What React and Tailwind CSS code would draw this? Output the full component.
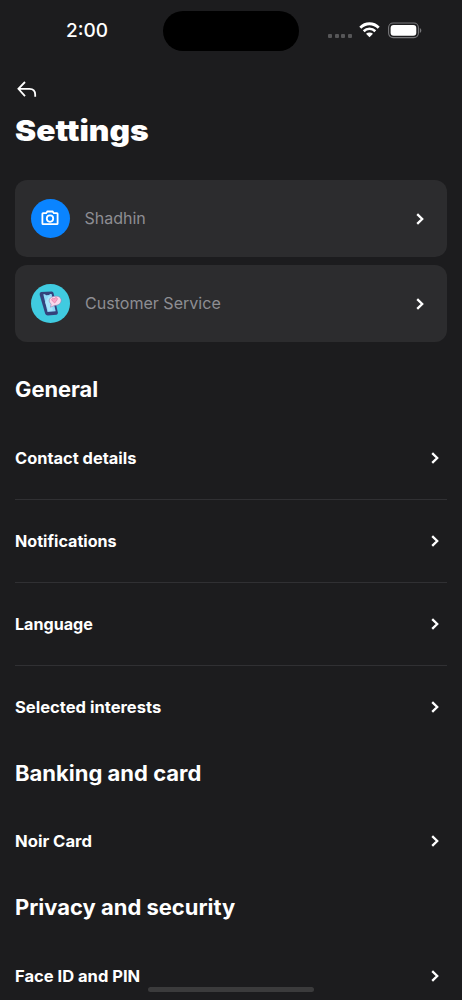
import React from 'react';

const sections = [
  {
    title: 'General',
    titleClass: 'scale-x-[1.04]',
    items: [
      { label: 'Contact details', className: 'scale-x-[1.025]' },
      { label: 'Notifications', className: 'scale-x-[1.008]' },
      { label: 'Language', className: 'scale-x-[1.008]' },
      { label: 'Selected interests', className: 'scale-x-[1.035]' },
    ],
  },
  {
    title: 'Banking and card',
    titleClass: 'scale-x-[1.048]',
    items: [{ label: 'Noir Card', className: 'scale-x-[1.04]' }],
  },
  {
    title: 'Privacy and security',
    titleClass: 'scale-x-[1.046]',
    items: [{ label: 'Face ID and PIN', className: 'scale-x-[1.033]' }],
  },
];

function Chevron() {
  return (
    <svg width="10" height="14" viewBox="0 0 10 14" fill="none" className="shrink-0">
      <path d="M2.2 2.1L7.2 7L2.2 11.9" stroke="white" strokeWidth="2.3" />
    </svg>
  );
}

function StatusBar() {
  return (
    <div className="relative h-[62px] shrink-0">
      <span className="absolute left-[66px] top-[19px] origin-left text-[19px] leading-6 font-medium">2:00</span>
      <div className="absolute left-[163px] top-[11px] h-10 w-[136px] rounded-full bg-black" />
      <div className="absolute left-[328px] top-[34px] flex gap-[2.5px]">
        <i className="size-1 rounded-[1px] bg-[#565658]" />
        <i className="size-1 rounded-[1px] bg-[#565658]" />
        <i className="size-1 rounded-[1px] bg-[#565658]" />
        <i className="size-1 rounded-[1px] bg-[#565658]" />
      </div>
      <svg className="absolute left-[359px] top-[22px]" width="21" height="16" viewBox="0 0 21 16" fill="none">
        <path d="M1.3 5.7C6.4 .4 14.6 .4 19.7 5.7" stroke="white" strokeWidth="2.8" />
        <path d="M4.7 9.2C8 6 13 6 16.3 9.2" stroke="white" strokeWidth="2.6" />
        <path d="M7 11.8C9 10 12 10 14 11.8L10.5 15.3Z" fill="white" />
      </svg>
      <svg className="absolute left-[388px] top-[22px]" width="35" height="17" viewBox="0 0 35 17" fill="none">
        <rect x=".6" y="1" width="29.8" height="14.6" rx="4.5" stroke="#77777a" strokeWidth="1.1" />
        <rect x="2.6" y="3" width="25.7" height="10.7" rx="3" fill="white" />
        <path d="M31.8 6v5c2-.8 2-4.2 0-5z" fill="#77777a" />
      </svg>
    </div>
  );
}

function CameraIcon() {
  return (
    <div className="flex size-[39px] shrink-0 items-center justify-center rounded-full bg-[#0a84ff]">
      <svg width="18" height="16" viewBox="0 0 18 16" fill="none" stroke="white" strokeWidth="1.8" className="mr-px mb-px">
        <path d="M2 3.2h3.2l1.2-1.7h5.2l1.2 1.7H16q.6 0 .6.6v9.8q0 .6-.6.6H2q-.6 0-.6-.6V3.8q0-.6.6-.6z" />
        <circle cx="9" cy="8.6" r="3.2" />
      </svg>
    </div>
  );
}

function ServiceIcon() {
  return (
    <svg width="39" height="39" viewBox="0 0 39 39" fill="none" className="shrink-0">
      <circle cx="19.5" cy="19.5" r="19.5" fill="#40cbe0" />
      <path d="M10 8.1L20.8 7.6Q22.2 7.7 22.5 9L26.9 28.8Q27 30.3 25.5 30.8L16.8 31.5Q14.8 31.5 14.2 29.8L8.7 11Q8.3 8.8 10 8.1z" fill="#34427c" />
      <path d="M12.3 10.3L14 10.2L15 11.2L18.3 11L18.8 9.9L20.6 9.9L24.7 27.3L16.5 28.1z" fill="#8ed8f7" />
      <path d="M14.2 18.5L17.4 12.4L20.2 12L21.7 26.4L17.5 27z" fill="#b9edff" opacity=".65" />
      <path d="M24 12.3c4-.5 6.3 1.5 6.1 4.3-.2 3.2-3 4.9-6.6 4.8l-4 1.8.7-3.1c-4-3.6-1.6-7.3 3.8-7.8z" fill="#f8d9eb" stroke="#9a7db1" strokeWidth=".6" />
      <path d="M23.7 19l-2.5-2.3c-1.5-1.7.6-3.2 2-1.6.8-2.3 4-1.8 3 .6z" fill="#f8a6c8" stroke="#dd6f9f" strokeWidth=".6" />
    </svg>
  );
}

function ProfileCard({ icon, label, className }) {
  return (
    <button className="flex h-[77px] w-full items-center rounded-xl bg-[#2c2c2e] pr-[22px] pl-[15.5px] text-left">
      {icon}
      <span className="mb-0.5 ml-[15px] flex-1 text-[16px] text-[#8e8e93]">
        <span className={`inline-block origin-left ${className}`}>{label}</span>
      </span>
      <Chevron />
    </button>
  );
}

function Section({ title, titleClass, items }) {
  return (
    <section>
      <h2 className="flex h-[52px] items-center pb-[2px] text-[21px] font-bold">
        <span className={`inline-block origin-left whitespace-nowrap ${titleClass}`}>{title}</span>
      </h2>
      <ul>
        {items.map((item) => (
          <li
            key={item.label}
            className="flex h-[83px] items-center justify-between border-b border-[#303033] pr-[7px] last:h-[82.5px] last:border-transparent"
          >
            <span className={`inline-block origin-left whitespace-nowrap text-[16px] font-bold ${item.className}`}>
              {item.label}
            </span>
            <Chevron />
          </li>
        ))}
      </ul>
    </section>
  );
}

export default function App() {
  return (
    <div className="relative flex h-screen w-full flex-col overflow-hidden bg-[#1c1c1e] font-['Inter',sans-serif] text-white">
      <StatusBar />
      <main className="px-[15px]">
        <button aria-label="Back" className="mt-[19px] ml-[2px] block">
          <svg width="20" height="17" viewBox="0 0 20 17" fill="none" stroke="white" strokeWidth="1.8">
            <path d="M8 1L1.4 7.8L8 15.2M1.6 7.8H12.5Q18.2 7.8 18.2 13.7V15.8" />
          </svg>
        </button>
        <h1 className="mt-[15px] h-9 text-[28.5px] leading-9 font-black">
          <span className="inline-block origin-left scale-x-[1.115]">Settings</span>
        </h1>
        <div className="mt-[31px] mb-[23px] flex flex-col gap-2">
          <ProfileCard icon={<CameraIcon />} label="Shadhin" className="scale-x-[1.0]" />
          <ProfileCard icon={<ServiceIcon />} label="Customer Service" className="scale-x-[1.003]" />
        </div>
        {sections.map((section) => (
          <Section key={section.title} {...section} />
        ))}
      </main>
      <div className="absolute bottom-2 left-[148px] h-[5px] w-[166px] rounded-full bg-[#3b3b3c]" />
    </div>
  );
}
